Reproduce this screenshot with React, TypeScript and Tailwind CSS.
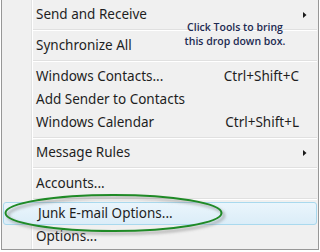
import React from 'react';

type Row =
  | { kind: 'item'; label: string; shortcut?: string; sub?: boolean; active?: boolean }
  | { kind: 'sep'; h: string };

const rows: Row[] = [
  { kind: 'item', label: 'Send and Receive', sub: true },
  { kind: 'sep', h: 'h-[8px]' },
  { kind: 'item', label: 'Synchronize All' },
  { kind: 'sep', h: 'h-[8px]' },
  { kind: 'item', label: 'Windows Contacts...', shortcut: 'Ctrl+Shift+C' },
  { kind: 'item', label: 'Add Sender to Contacts' },
  { kind: 'item', label: 'Windows Calendar', shortcut: 'Ctrl+Shift+L' },
  { kind: 'sep', h: 'h-[7px]' },
  { kind: 'item', label: 'Message Rules', sub: true },
  { kind: 'sep', h: 'h-[8px]' },
  { kind: 'item', label: 'Accounts...' },
  { kind: 'sep', h: 'h-[7px]' },
  { kind: 'item', label: 'Junk E-mail Options...', active: true },
  { kind: 'item', label: 'Options...' },
];

function Arrow() {
  return (
    <svg width="4" height="6" viewBox="0 0 4 6" className="block ml-[2px]">
      <path d="M0 0 L3.5 3 L0 6 Z" fill="#1a1a1a" />
    </svg>
  );
}

export default function App() {
  return (
    <div className="w-[320px] h-[252px] bg-white relative overflow-hidden" style={{ fontFamily: '"Noto Sans", "Open Sans", sans-serif' }}>
      <div className="absolute left-[1px] top-0 w-[318px] h-[250px] bg-[#f0f0f0] border-l border-r border-b border-[#979797]">
        {/* gutter line */}
        <div className="absolute left-[29px] top-0 bottom-0 w-[1px] bg-[#e2e3e3]" />
        <div className="absolute left-[30px] top-0 bottom-0 w-[1px] bg-white" />

        <div className="relative flex flex-col pt-[3px]">
          {rows.map((r, i) =>
            r.kind === 'sep' ? (
              <div key={i} className={`${r.h} flex flex-col justify-center pl-[31px] pr-[1px]`}>
                <div className="h-[1px] bg-[#e0e0e0]" />
                <div className="h-[1px] bg-white" />
              </div>
            ) : (
              <div
                key={i}
                className={`h-[23px] flex items-center pl-[34px] pr-[11px] text-[13.5px] text-[#1e1e1e] ${
                  r.active
                    ? 'mx-[1px] pl-[33px] pr-[10px] rounded-[3px] border border-[#a9d9ee] bg-gradient-to-b from-[#eaf5fc] to-[#dbedf8]'
                    : ''
                }`}
              >
                <span className="flex-1 whitespace-nowrap">{r.label}</span>
                {r.shortcut && <span className="mr-[8px] whitespace-nowrap">{r.shortcut}</span>}
                {r.sub && <Arrow />}
              </div>
            )
          )}
        </div>
      </div>

      {/* annotation */}
      <div className="absolute left-[172px] top-[20px] w-[126px] text-center text-[10.5px] leading-[14px] font-semibold text-[#1d2a52]" style={{ fontFamily: '"Open Sans", "Noto Sans", sans-serif' }}>
        Click Tools to bring
        <br />
        this drop down box.
      </div>

      {/* green ellipse */}
      <svg className="absolute left-0 top-0" width="320" height="252" viewBox="0 0 320 252">
        <defs>
          <filter id="sh" x="-20%" y="-50%" width="140%" height="200%">
            <feGaussianBlur stdDeviation="1.6" />
          </filter>
        </defs>
        <ellipse cx="116" cy="215.5" rx="108" ry="18" fill="none" stroke="#7a7a7a" strokeOpacity="0.55" strokeWidth="2.5" filter="url(#sh)" />
        <ellipse cx="113.5" cy="213" rx="108" ry="18" fill="none" stroke="#1f8a26" strokeWidth="2" />
      </svg>
    </div>
  );
}
